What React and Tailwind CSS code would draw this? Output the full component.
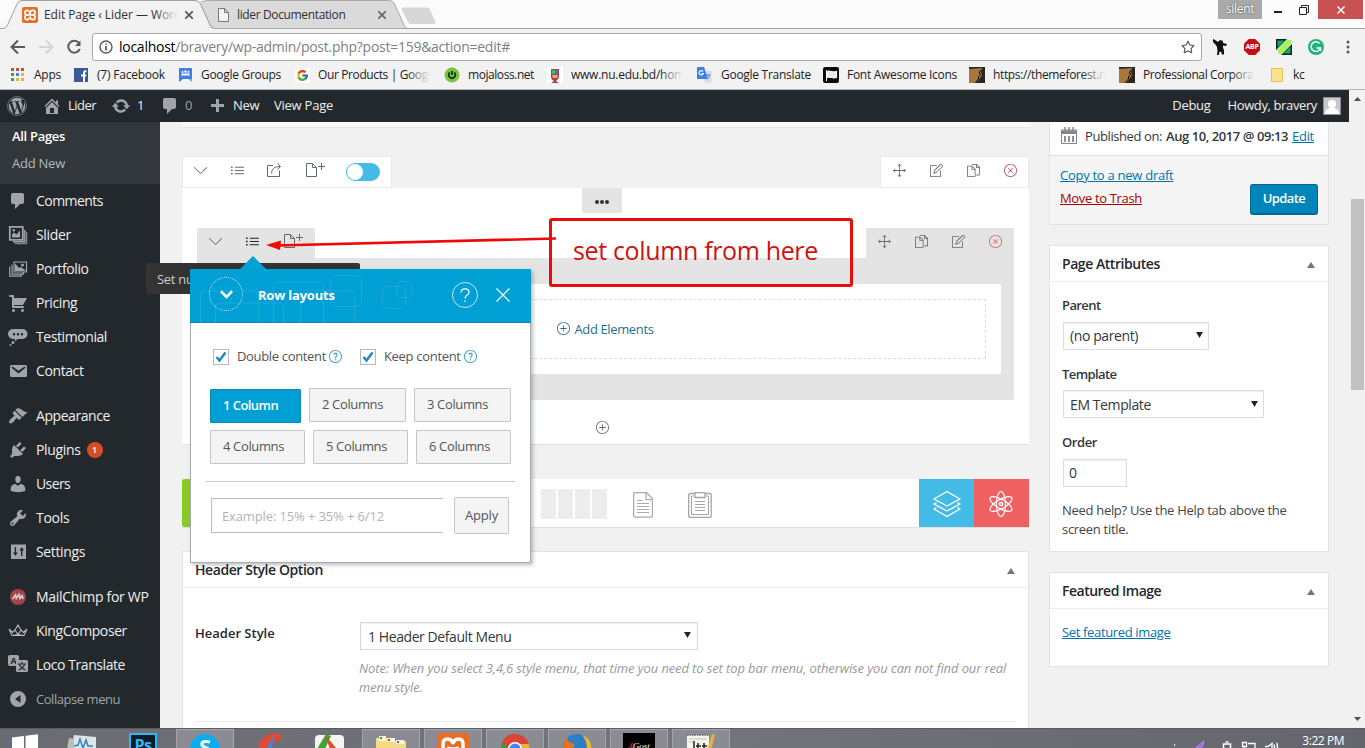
import React from "react";
import { SlArrowDown, SlList, SlDoc, SlCursorMove, SlNote, SlDocs, SlClose, SlPlus, SlQuestion } from "react-icons/sl";
import { FaWordpress, FaRegStar } from "react-icons/fa";
import { FcGoogle } from "react-icons/fc";

const Dash = ({ d, className = "" }) => (
  <svg viewBox="0 0 20 20" className={"size-5 shrink-0 fill-[#a0a5aa] " + className}><path fillRule="evenodd" d={d} /></svg>
);

const P = {
  comment: "M5 2h9c1.1 0 2 .9 2 2v7c0 1.1-.9 2-2 2h-2l-5 5v-5H5c-1.1 0-2-.9-2-2V4c0-1.1.9-2 2-2z",
  home: "M16 8.5l1.53 1.53-1.06 1.06L10 4.6l-6.47 6.49-1.06-1.06L10 2.5l4 4v-2h2v4zm-6-2.46l6 5.99V18H4v-5.97zM12 17v-5H8v5h4z",
  update: "M10.2 3.28c3.53 0 6.43 2.61 6.92 6h2.08l-3.5 4-3.5-4h2.32c-.45-1.97-2.21-3.45-4.32-3.45-1.45 0-2.73.71-3.54 1.78L4.95 5.66C6.23 4.2 8.11 3.28 10.2 3.28zm-.4 13.44c-3.52 0-6.43-2.61-6.92-6H.8l3.5-4c1.17 1.33 2.33 2.67 3.5 4H5.48c.45 1.97 2.21 3.45 4.32 3.45 1.45 0 2.73-.71 3.54-1.78l1.71 1.95c-1.28 1.46-3.15 2.38-5.25 2.38z",
  plus: "M17 8v3h-5v5H9v-5H4V8h5V3h3v5h5z",
  cart: "M6 13h9c.55 0 1 .45 1 1s-.45 1-1 1H5c-.55 0-1-.45-1-1V4H2c-.55 0-1-.45-1-1s.45-1 1-1h3c.55 0 1 .45 1 1v2h13l-4 7H6v1zm-.5 3c.83 0 1.5.67 1.5 1.5S6.33 19 5.5 19 4 18.33 4 17.5 4.67 16 5.5 16zm9 0c.83 0 1.5.67 1.5 1.5s-.67 1.5-1.5 1.5-1.5-.67-1.5-1.5.67-1.5 1.5-1.5z",
  email: "M3.87 4h13.25C18.37 4 19 4.59 19 5.79v8.42c0 1.19-.63 1.79-1.88 1.79H3.87c-1.25 0-1.88-.6-1.88-1.79V5.79c0-1.2.63-1.79 1.88-1.79zm6.62 8.6l6.74-5.53c.24-.2.43-.66.13-1.07-.29-.41-.82-.42-1.17-.17l-5.7 3.86L4.8 5.83c-.35-.25-.88-.24-1.17.17-.3.41-.11.87.13 1.07z",
  brush: "M14.48 11.06L7.41 3.99l1.5-1.5c.5-.56 2.3-.47 3.51.32 1.21.8 1.43 1.28 2.91 2.1 1.18.64 2.45 1.26 4.45.85zm-.71.71L6.7 4.7 4.93 6.47c-.39.39-.39 1.02 0 1.41l1.06 1.06c.39.39.39 1.03 0 1.42-.6.6-1.43 1.11-2.21 1.69-.35.26-.7.53-1.01.84C1.43 14.23.4 16.08 1.4 17.07c.99 1 2.84-.03 4.18-1.36.31-.31.58-.66.85-1.02.57-.78 1.08-1.61 1.69-2.21.39-.39 1.02-.39 1.41 0l1.06 1.06c.39.39 1.02.39 1.41 0z",
  plug: "M13.11 4.36L9.87 7.6 8 5.73l3.24-3.24c.35-.34 1.05-.2 1.56.32.52.51.66 1.21.31 1.55zm-8 1.77l.91-1.12 9.01 9.01-1.19.84c-.71.71-2.63 1.16-3.82 1.16H6.14L4.9 17.26c-.59.59-1.54.59-2.12 0-.59-.58-.59-1.53 0-2.12l1.24-1.24v-3.88c0-1.13.4-3.19 1.09-3.89zm7.26 3.97l3.24-3.24c.34-.35 1.04-.21 1.55.31.52.51.66 1.21.31 1.55l-3.24 3.25z",
  user: "M10 9.25c-2.27 0-2.73-3.44-2.73-3.44C7 4.02 7.82 2 9.97 2c2.16 0 2.98 2.02 2.71 3.81 0 0-.41 3.44-2.68 3.44zm0 2.57L12.72 10c2.39 0 4.52 2.33 4.52 4.53v2.49s-3.65 1.13-7.24 1.13c-3.65 0-7.24-1.13-7.24-1.13v-2.49c0-2.25 1.94-4.48 4.47-4.48z",
  wrench: "M16.68 9.77c-1.34 1.34-3.3 1.67-4.95.99l-5.41 6.52c-.99.99-2.59.99-3.58 0s-.99-2.59 0-3.57l6.52-5.42c-.68-1.65-.35-3.61.99-4.95 1.28-1.28 3.12-1.62 4.72-1.06l-2.89 2.89 2.82 2.82 2.86-2.87c.53 1.58.18 3.39-1.08 4.65zM3.81 16.21c.4.39 1.04.39 1.43 0 .4-.4.4-1.04 0-1.43-.39-.4-1.03-.4-1.43 0-.39.39-.39 1.03 0 1.43z",
  settings: "M3 2.500h15v14.500H3zM6.700 5v5.500H5l2.400 3.500 2.400-3.500H8.100V5zM13 14V8.500h-1.700L13.700 5l2.400 3.500h-1.700V14z",
  collapse: "M10 2a8 8 0 1 1 0 16a8 8 0 0 1 0-16zM12.500 6L7 10l5.500 4z",
  testimonial: "M5 2h9.500a4.500 4.500 0 0 1 0 10H9.500L7 14.500V12H5a5 5 0 0 1 0-10zM6 6a1.200 1.200 0 1 0 .01 2.400A1.200 1.200 0 0 0 6 6zm4 0a1.200 1.200 0 1 0 .01 2.400A1.200 1.200 0 0 0 10 6zm4 0a1.200 1.200 0 1 0 .01 2.400A1.200 1.200 0 0 0 14 6zM5 14a1.500 1.500 0 1 1 0 3a1.500 1.500 0 0 1 0-3zM2.500 17a1 1 0 1 1 0 2a1 1 0 0 1 0-2z",
};

const SliderIcon = () => (
  <svg viewBox="0 0 20 20" className="size-5 shrink-0" fill="none" stroke="#a0a5aa" strokeWidth="1.500">
    <path d="M1.800 1.800h13v13h-13z" strokeWidth="1.800" /><path d="M5 16.700h11.800V5" strokeWidth="1.400" /><path d="M7 18.700h11.700V7" strokeWidth="1" />
    <path d="M4 12.500V9.500l2-2 2.500 2 3.500-4v7z" fill="#a0a5aa" stroke="none" /><circle cx="5.800" cy="5.300" r="1.300" fill="#a0a5aa" stroke="none" />
  </svg>
);
const PortfolioIcon = () => (
  <svg viewBox="0 0 20 20" className="size-5 shrink-0" fill="none" stroke="#a0a5aa" strokeWidth="1.200">
    <path d="M6 3h12.500v10H6z" /><path d="M4 5.500v9.700h11.500V13M1.700 7.500v9.700h11.500V15" />
    <path d="M7 12V4.500l4 4.500 2-1 5 4z" fill="#a0a5aa" stroke="none" /><circle cx="14.500" cy="6" r="1.500" fill="#a0a5aa" stroke="none" />
  </svg>
);
const ChimpIcon = () => (
  <svg viewBox="0 0 20 20" className="size-5 shrink-0"><circle cx="10" cy="10" r="8" fill="#a3434b" /><path d="M4.500 12L7.500 8l.8 3.500L11 7.500l1 4L14 8.500l1.300 3.500" fill="none" stroke="#d3c9cb" strokeWidth="1.700" /></svg>
);
const CrownIcon = () => (
  <svg viewBox="0 0 20 20" className="size-5 shrink-0" fill="none" stroke="#b4b9be" strokeWidth="1.100"><path d="M10 4L7 9l3 4.500L13 9zM1 8l3.500 3.500L7 9M19 8l-3.500 3.500L13 9M1 8l3 6.500h12L19 8M4 14.500L10 13.500l6 1" /></svg>
);
const LocoIcon = () => (
  <div className="relative size-5 shrink-0">
    <div className="grid h-[11px] w-[11px] place-items-center rounded-[2px] bg-[#a0a5aa] text-[9px] leading-none font-bold text-[#23282d] ">A</div>
    <svg viewBox="0 0 12 12" className="absolute top-[5px] left-[8px] size-3"><rect width="12" height="12" rx="1.500" fill="#a0a5aa" /><path d="M2 4h8M6 2v2M8.500 4.500C7.500 7.500 5 9 2.500 10M3.500 4.500C4.500 7.500 7 9 9.500 10" stroke="#23282d" strokeWidth="1.100" fill="none" /></svg>
  </div>
);

const MENU = [
  [<Dash d={P.comment} />, "Comments", "tracking-[-0.54px]"],
  [<SliderIcon />, "Slider", "tracking-[-0.35px]"],
  [<PortfolioIcon />, "Portfolio", "tracking-[-0.4px]"],
  [<Dash d={P.cart} />, "Pricing", "tracking-[-0.4px]"],
  [<Dash d={P.testimonial} />, "Testimonial", "tracking-[-0.42px]"],
  [<Dash d={P.email} />, "Contact", "tracking-[-0.4px]"],
  null,
  [<Dash d={P.brush} />, "Appearance", "tracking-[-0.43px]"],
  [<Dash d={P.plug} />, "Plugins", "tracking-[-0.35px]", 1],
  [<Dash d={P.user} />, "Users", "tracking-[-0.6px]"],
  [<Dash d={P.wrench} />, "Tools", "tracking-[-0.3px]"],
  [<Dash d={P.settings} />, "Settings", "tracking-[-0.35px]"],
  null,
  [<ChimpIcon />, "MailChimp for WP", "tracking-[-0.3px]"],
  [<CrownIcon />, "KingComposer", "tracking-[-0.4px]"],
  [<LocoIcon />, "Loco Translate", "tracking-[-0.44px]"],
];

const Fade = ({ children, className }) => (
  <span className={"relative overflow-hidden whitespace-pre " + className}>{children}
    <span className="absolute inset-y-0 right-0 w-6 bg-gradient-to-r from-transparent to-[#f2f2f2]" />
  </span>
);

const Beard = () => (
  <svg viewBox="0 0 16 16" className="size-4"><rect width="16" height="16" fill="#2b2624" /><path d="M0 2l13-1-1 4 1 3-2 3-3 4-4 1H0z" fill="#a8783a" /><path d="M12 3l-2 3 2 1-3 3 1 1-3 4" stroke="#15110f" fill="none" /></svg>
);

const MARKS = [
  ["w-[63px]", "Apps", "tracking-[-0.25px]", <svg viewBox="0 0 14 14" className="mr-[9px] size-[14px] shrink-0"><rect width="3" height="3" x="0" fill="#d2473c" /><rect width="3" height="3" x="5" fill="#d2473c" /><rect width="3" height="3" x="10" fill="#d2473c" /><rect y="5" width="3" height="3" fill="#3ba05c" /><rect y="5" width="3" height="3" x="5" fill="#4683ea" /><rect y="5" width="3" height="3" x="10" fill="#eab035" /><rect y="10" width="3" height="3" fill="#3ba05c" /><rect y="10" width="3" height="3" x="5" fill="#eab035" /><rect y="10" width="3" height="3" x="10" fill="#eab035" /></svg>],
  ["w-[105px]", "(7) Facebook", "tracking-[-0.21px]", <svg viewBox="0 0 14 14" className="mr-[9px] size-[14px] shrink-0"><rect width="14" height="14" fill="#3b5998" /><path d="M12.500 3.200h-1.200q-1.300 0-1.300 1.300V14M7 7.500h5.200" stroke="#fff" strokeWidth="2" fill="none" /></svg>],
  ["w-[117px]", "Google Groups", "tracking-[-0.3px]", <svg viewBox="0 0 16 16" className="mr-[7px] -ml-px size-4"><path d="M1 1h13v11H5l-4 3z" fill="#3f7fe8" /><path d="M10 12h4v3z" fill="#7baaf7" /><circle cx="4.500" cy="5" r="1" fill="#fff" /><circle cx="7.500" cy="4.500" r="1.200" fill="#fff" /><circle cx="10.500" cy="5" r="1" fill="#fff" /><path d="M3 8.500h9L11 6.500H4z" fill="#fff" /></svg>],
  ["w-[149px]", "Our Products | Google", "tracking-[-0.38px]", <span className="mr-[8px] -ml-px flex size-[15px] items-center justify-center rounded-[2px] bg-white"><FcGoogle className="size-[13px]" /></span>, 1],
  ["w-[103px]", "mojaloss.net", "tracking-[-0.44px]", <svg viewBox="0 0 16 16" className="mr-[8px] -ml-px size-4"><circle cx="8" cy="8" r="7.500" fill="#7cc243" /><path d="M8 4v4M5.800 5.500a3.300 3.300 0 1 0 4.400 0" stroke="#143b12" strokeWidth="1.800" fill="none" /></svg>],
  ["w-[149px]", "www.nu.edu.bd/home", "tracking-[-0.25px]", <svg viewBox="0 0 16 16" className="mr-[8px] -ml-px size-4"><rect width="16" height="16" fill="#fff" /><path d="M4 2h8v7c0 3-2 4-3 5l3 2H4l3-2c-2-1-3-2-3-5z" fill="#a83f56" /><path d="M5 3h3v4H5z" fill="#4fae6b" /><path d="M8 3h3v4H8z" fill="#3e7bc0" /><path d="M5 8h6l-1 3H6z" fill="#d8b648" /></svg>, 1],
  ["w-[126px]", "Google Translate", "tracking-[-0.28px]", <svg viewBox="0 0 16 16" className="mr-[9px] -ml-px size-4"><path d="M6 4h9.500v11.500H9z" fill="#d7dbe2" /><path d="M1 0h7l4 12H1z" fill="#3f7fe8" /><path d="M7 4.500A2.200 2.200 0 1 0 7.300 6.500H5.500" stroke="#fff" strokeWidth="1.100" fill="none" /><path d="M10.500 8h4M12.500 7v1M13.500 8.500c-.5 2-1.500 3-2.500 3.500" stroke="#5b7fc0" fill="none" /></svg>],
  ["w-[146px]", "Font Awesome Icons", "tracking-[-0.28px]", <svg viewBox="0 0 16 16" className="mr-[8px] size-4"><rect width="16" height="16" rx="2" fill="#0b0b0b" /><path d="M3.500 3v11" stroke="#fff" /><path d="M4 4.500c3-1.500 5 1.500 9.500 0v6c-4 1.500-6-1.500-9.500 0z" stroke="#fff" strokeWidth="1.200" fill="#e8e8e8" /></svg>],
  ["w-[150px]", "https://themeforest.ne", "tracking-[-0.36px]", <span className="mr-[8px]"><Beard /></span>, 1],
  ["w-[152px]", "Professional Corporati", "tracking-[-0.38px]", <span className="mr-[8px]"><Beard /></span>, 1],
  ["w-[60px]", "kc", "tracking-[-0.2px]", <span className="mr-[10px] h-[14px] w-[12px] border border-[#e8c354] bg-[#fbe38e]" />],
];

const Caret = () => <svg viewBox="0 0 8 7" className="mb-[2px] h-[6px] w-[7px] fill-[#222]"><path d="M0 0h8L4 7z" /></svg>;
const Up = () => <svg viewBox="0 0 8 6" className="mt-[2px] h-[6px] w-2 fill-[#72777c]"><path d="M0 6h8L4 0z" /></svg>;
const DocPlus = () => <span className="flex"><svg viewBox="0 0 11 14" className="h-[14px] w-[11px]" fill="none" stroke="currentColor"><path d="M.5.5h6l4 4v9H.5zM6.500.5v4h4" /></svg><svg viewBox="0 0 7 7" className="ml-px size-[7px]" stroke="currentColor"><path d="M3.500 0v7M0 3.500h7" /></svg></span>;

function Chrome() {
  return (
    <div className="shrink-0">
      <div className="relative h-[29px] bg-[#fbfbfb]">
        <svg className="absolute inset-0 h-[29px] w-[1365px]" viewBox="0 0 1365 29" fill="none">
          <path d="M0 28.500H1365" stroke="#a0a0a0" />
          <path d="M202 1.500Q206 .5 209 .5H389Q393 .5 394.500 4L404 25Q405 28.500 408 28.500H212L200 4z" fill="#dadada" stroke="#a9a9a9" />
          <path d="M0 28.500H3Q6 28 7.500 25L17 4Q18.500 .5 22 .5H195Q199 .5 200.500 4L210 25Q211 28.500 215 28.500V29.500H0z" fill="#f2f2f2" />
          <path d="M0 28.500H3Q6 28 7.500 25L17 4Q18.500 .5 22 .5H195Q199 .5 200.500 4L210 25Q211 28.500 215 28.500" stroke="#a0a0a0" />
          <path d="M402.500 7.500H427Q429 7.500 430 9.500L435.500 22Q436 24 434 24H411Q409 24 408 22L402 10Q401.500 7.500 402.500 7.500z" fill="#d6d6d6" />
        </svg>
        <div className="relative flex h-[29px] items-center text-[12px] text-[#303030]">
          <svg viewBox="0 0 16 16" className="ml-[22px] size-4"><rect width="16" height="16" rx="2" fill="#ea6d23" /><g fill="none" stroke="#fff" strokeWidth="1.700"><path d="M8 8h2.500c3.600 0 3.400-4.600.4-4.600C8.800 3.400 8 5 8 8 8 5 7.200 3.400 5.100 3.400c-3 0-3.200 4.600.4 4.600H8" /><path d="M5.500 8c-3.600 0-3.400 4.600-.4 4.600 1.500 0 2.400-1 2.900-2.200.5 1.200 1.400 2.200 2.900 2.200 3 0 3.200-4.600-.4-4.600" /></g></svg>
          <Fade className="ml-[6px] w-[134px] tracking-[-0.05px]">Edit Page ‹ Lider — WordP</Fade>
          <svg viewBox="0 0 8 8" className="ml-[7px] size-2" stroke="#555" strokeWidth="1.600"><path d="M0 0l8 8M8 0L0 8" /></svg>
          <svg viewBox="0 0 11 14" className="ml-[25px] h-[14px] w-[11px]" fill="#f3f3f3" stroke="#777"><path d="M.5.5h6l4 4v9H.5zM6.500.5v4h4" /></svg>
          <span className="ml-[8px] w-[141px] pt-px tracking-[-0.36px]">lider Documentation</span>
          <svg viewBox="0 0 8 8" className="size-2" stroke="#666" strokeWidth="1.600"><path d="M0 0l8 8M8 0L0 8" /></svg>
          <span className="grow" />
          <span className="h-[19px] w-[44px] self-start bg-[#a9a9a9] text-center text-[12px] leading-[18px] tracking-[-0.3px] text-white [text-shadow:0_0_2px_#333]">silent</span>
          <span className="mt-[-5px] ml-[12px] h-[2px] w-2 bg-[#222] " />
          <svg viewBox="0 0 10 10" className="mt-[-10px] ml-[17px] size-[10px]" fill="none" stroke="#222"><path d="M2.500 2.500V.5h7v7h-2M.5 2.500h7v7h-7z" /></svg>
          <span className="mr-[2px] ml-[9px] grid h-[19px] w-[45px] place-items-center self-start bg-[#c75050]"><svg viewBox="0 0 8 8" className="size-2" stroke="#fff" strokeWidth="1.500"><path d="M.5 .5l7 7M7.500 .5l-7 7" /></svg></span>
        </div>
      </div>
      <div className="flex h-[33px] items-end bg-[#f2f2f2]">
        <svg viewBox="0 0 92 33" className="h-[33px] w-[92px]" fill="none" strokeWidth="2"><path d="M25 18H12M18 11.500L11.500 18l6.500 6.500" stroke="#5a5a5a" /><path d="M39 18h13M46 11.500l6.500 6.500-6.500 6.500" stroke="#d4d4d4" /><path d="M79 14a6 6 0 1 0 .8 6" stroke="#5a5a5a" /><path d="M80.500 11.500v5.500H75z" fill="#5a5a5a" /></svg>
        <div className="mb-[1px] flex h-[28px] w-[1110px] items-center rounded-[3px] border border-[#a8a8a8] bg-white">
          <svg viewBox="0 0 14 14" className="ml-[6px] size-[14px]" fill="none" stroke="#5a5a5a" strokeWidth="1.400"><circle cx="7" cy="7" r="6" /><path d="M7 6v4.500M7 3.500v1.300" strokeWidth="1.700" /></svg>
          <span className="ml-[6px] grow pb-[2px] text-[14px] tracking-[-0.265px] text-[#808080]"><span className="text-black">localhost</span>/bravery/wp-admin/post.php?post=159&amp;action=edit#</span>
          <FaRegStar className="mr-[6px] size-[14px] text-[#5a5a5a]" />
        </div>
        <div className="mb-[7px] ml-[10px] flex items-center">
          <svg viewBox="0 0 16 16" className="size-4" fill="#111"><path d="M1 0l2 1 3 2 2-2 3 1v2l4 1-1 2-3-.5v2l1 3v4h-2l-1-3-2 1v3H5l.5-5L5 8 3.500 5.500 1 3z" /></svg>
          <span className="ml-[16px] flex size-4 items-center justify-center bg-[#c70d14] text-[7px] font-bold tracking-[-0.3px] text-white [clip-path:polygon(30%_0,70%_0,100%_30%,100%_70%,70%_100%,30%_100%,0_70%,0_30%)]">ABP</span>
          <svg viewBox="0 0 16 16" className="ml-[16px] size-4"><path d="M0 0h11L0 11zM16 5v11H5z" fill="#122126" /><path d="M1.500 8.500v-7h7zM14.500 7.500v7h-7z" fill="#0fae5d" /><path d="M1 11L11 1h4v4L6 15H3z" fill="#a4f55c" /></svg>
          <svg viewBox="0 0 16 16" className="ml-[16px] size-4"><circle cx="8" cy="8" r="8" fill="#1fb47a" /><path d="M11.500 4.500A4.800 4.800 0 1 0 12.500 9H8.500M12.500 9v3" stroke="#fff" strokeWidth="1.500" fill="none" /></svg>
          <svg viewBox="0 0 4 14" className="ml-[22px] h-[14px] w-1 fill-[#5a5a5a]"><circle cx="2" cy="2" r="1.500" /><circle cx="2" cy="7" r="1.500" /><circle cx="2" cy="12" r="1.500" /></svg>
        </div>
      </div>
      <div className="flex h-[28px] items-center border-b border-[#b5b5b5] bg-[#f2f2f2] pb-px pl-[11px] text-[12px] text-[#1c1c1c]">
        {MARKS.map(([w, t, tr, icon, fade]) => (
          <div key={t} className={"flex h-[26px] shrink-0 items-center " + w}>{icon}{fade ? <Fade className={"mb-px w-[112px] " + tr}>{t}</Fade> : <span className={"mb-px whitespace-nowrap " + tr}>{t}</span>}</div>
        ))}
      </div>
    </div>
  );
}

function AdminBar() {
  return (
    <div className="flex h-8 shrink-0 items-center bg-[#23282d] text-[13px] tracking-[-0.3px] text-[#eee]">
      <FaWordpress className="ml-[7px] size-5 text-[#a0a5aa]" />
      <Dash d={P.home} className="ml-[15px]" /><span className="ml-[6px] w-[43px] tracking-[-0.5px]">Lider</span>
      <Dash d={P.update} /><span className="ml-[6px] w-[23px]">1</span>
      <Dash d={P.comment} className="-mt-px" /><span className="ml-[5px] w-[22px] text-[#9ea3a8]">0</span>
      <Dash d={P.plus} /><span className="ml-[6px] w-[41px]">New</span>
      <span className="tracking-[-0.24px]">View Page</span>
      <span className="grow" />
      <span className="mr-[17px]">Debug</span><span className="tracking-[-0.38px]">Howdy, bravery</span>
      <svg viewBox="0 0 18 18" className="mr-[8px] ml-[6px] size-[18px]"><rect width="18" height="18" fill="#8c8f94" /><rect x="1" y="1" width="16" height="16" fill="#c8c8c8" /><circle cx="9" cy="7" r="4" fill="#fff" /><path d="M2 17c0-5 3-6 7-6s7 1 7 6z" fill="#fff" /></svg>
    </div>
  );
}

function Sidebar() {
  return (
    <div className="w-[160px] shrink-0 bg-[#23282d] text-[14px] text-[#eee]">
      <div className="h-[62px] bg-[#32373c] pt-px pl-3 text-[13px] leading-[27px]">
        <div className="font-semibold tracking-[-0.31px] text-white">All Pages</div>
        <div className="tracking-[-0.24px] text-[#b4b9be]">Add New</div>
      </div>
      {MENU.map((m, i) => m ? (
        <div key={i} className="flex h-[34px] items-center pl-2">
          {m[0]}<span className={"ml-2 pb-[2px] whitespace-nowrap " + m[2]}>{m[1]}</span>
          {m[3] && <span className="ml-[6px] grid size-4 place-items-center rounded-full bg-[#d54e21] text-[9px] font-semibold text-white">1</span>}
        </div>
      ) : <div key={i} className="h-[11px]" />)}
      <div className="flex h-[34px] items-center pl-2"><Dash d={P.collapse} /><span className="ml-2 pt-px text-[13px] tracking-[-0.45px] text-[#a0a5aa]">Collapse menu</span></div>
    </div>
  );
}

function Builder() {
  return (
    <div className="ml-[22px] w-[847px] shrink-0 text-[#66696d]">
      <div className="h-[6px] border-b border-[#e5e5e5] bg-[#fafafa]" />
      <div className="mt-[28px] flex justify-between">
        <div className="flex h-[32px] w-[210px] items-center border border-[#e8e8e8] bg-white pb-[4px] pl-[11px]">
          <SlArrowDown className="size-[13px]" /><SlList className="ml-[24px] size-[13px]" />
          <svg viewBox="0 0 14 14" className="ml-[23px] size-[14px]" fill="none" stroke="currentColor"><path d="M6 2.500H.5v11h12V7.500" /><path d="M4.500 10.500C5 6 7 3.500 13 3.500M10.500.5l3 3-3 3" /></svg>
          <span className="ml-[25px]"><DocPlus /></span>
          <span className="mt-[4px] ml-[21px] flex h-[18px] w-[34px] items-center rounded-full bg-[#44bbe4] pl-px"><span className="size-4 rounded-full bg-white" /></span>
        </div>
        <div className="flex h-[32px] w-[149px] items-center gap-[24px] border border-[#e8e8e8] bg-white pb-[4px] pl-[12px]">
          <SlCursorMove className="size-[13px]" /><SlNote className="size-[13px]" /><SlDocs className="size-[13px]" /><SlClose className="size-[13px] text-[#b5474b]" />
        </div>
      </div>
      <div className="h-[257px] border-b border-[#e0e0e0] bg-white px-[15px]">
        <div className="flex h-[40px] justify-center pr-[7px]"><div className="flex h-[25px] w-[40px] items-center justify-center gap-[1.5px] rounded-b-[2px] bg-[#e4e4e4] pt-[3px]"><i className="size-[3.500px] rounded-full bg-[#333]" /><i className="size-[3.500px] rounded-full bg-[#333]" /><i className="size-[3.500px] rounded-full bg-[#333]" /></div></div>
        <div className="flex justify-between">
          <div className="flex h-[30px] w-[118px] items-center bg-[#e4e4e4] pb-[4px] pl-[12px]"><SlArrowDown className="size-[13px]" /><SlList className="ml-[24px] size-[13px] text-[#222]" /><span className="ml-[25px]"><DocPlus /></span></div>
          <div className="flex h-[30px] w-[148px] items-center gap-[24px] bg-[#e4e4e4] pb-[4px] pl-[12px]"><SlCursorMove className="size-[13px]" /><SlDocs className="size-[13px]" /><SlNote className="size-[13px]" /><SlClose className="size-[13px] text-[#e0605f]" /></div>
        </div>
        <div className="h-[142px] rounded-b-[2px] bg-[#e4e4e4] px-[13px] pt-[26px]">
          <div className="h-[90px] rounded-[2px] bg-white px-[15px] pt-[15px]">
            <div className="flex h-[60px] items-center justify-center border border-dashed border-[#dcdcdc] pt-[2px] text-[13px] tracking-[-0.37px] text-[#1f6f96]"><SlPlus className="mr-[4px] mb-[3px] size-[13px]" />Add Elements</div>
          </div>
        </div>
        <div className="flex justify-center pt-[21px] pr-[7px]"><SlPlus className="size-[13px]" /></div>
      </div>
      <div className="mt-[34px] flex h-[49px] border-b border-[#e0e0e0] bg-white">
        <div className="w-[55px] rounded-l-[2px] bg-[#8acc26]" />
        <div className="ml-[304px] flex gap-[2px] pt-[10px]">{[0, 1, 2, 3].map(i => <i key={i} className="h-[30px] w-[15px] bg-[#ededed]" />)}</div>
        <svg viewBox="0 0 20 26" className="mt-[13px] ml-[26px] h-[26px] w-[20px]" fill="none" stroke="#aaa"><path d="M1.500.6h12l6 6v17q0 1.500-1.500 1.500H2Q.6 25 .6 23.500V2Q.6.6 2 .6zM13 .6v7h6.500" strokeWidth="1.300" /><path d="M4 8.500h5.500M4 11.500h12M4 14.500h12M4 17.500h12M4 20.500h12" /></svg>
        <svg viewBox="0 0 24 26" className="mt-[13px] ml-[35px] h-[26px] w-[24px]" fill="none" stroke="#a5a5a5"><rect x=".7" y="1.500" width="22.500" height="24" rx="1.500" strokeWidth="1.300" /><path d="M6 4H3.500v18.500h17V4H18" /><path d="M7 .7h10v4.800H7z" fill="#fff" strokeWidth="1.300" /><path d="M7 9.500h10M7 12.500h10M7 15.500h10M7 18.500h10" /></svg>
        <div className="ml-auto grid h-12 w-[55px] place-items-center bg-[#44bbe4] pt-[2px]"><svg viewBox="0 0 28 28" className="size-7" fill="none" stroke="#fff" strokeWidth="1.400" strokeLinejoin="round"><path d="M14 1.500l13 7.500-13 7-13-7z" /><path d="M3.500 12.500L1 14l13 7 13-7-2.500-1.500M3.500 17.500L1 19l13 7.500L27 19l-2.500-1.500" /></svg></div>
        <div className="grid h-12 w-[55px] place-items-center bg-[#ef6161] pt-[2px] pr-[1px]"><svg viewBox="0 0 28 28" className="size-7" fill="none" stroke="#fff" strokeWidth="1.200"><ellipse cx="14" cy="14" rx="4.500" ry="12.500" /><ellipse cx="14" cy="14" rx="4.500" ry="12.500" transform="rotate(60 14 14)" /><ellipse cx="14" cy="14" rx="4.500" ry="12.500" transform="rotate(-60 14 14)" /><circle cx="14" cy="14" r="1.600" strokeWidth="1.500" /></svg></div>
      </div>
      <div className="mt-[23px] h-[200px] w-[847px] border border-[#e3e3e3] bg-white text-[#23282d]">
        <div className="flex h-[36px] items-center justify-between border-b border-[#ececec] pr-[13px] pl-[12px]"><span className="text-[14px] font-semibold tracking-[-0.43px]">Header Style Option</span><Up /></div>
        <div className="flex pt-[34px] pl-[12px]">
          <span className="w-[165px] pt-[2px] text-[13px] font-semibold">Header Style</span>
          <div>
            <div className="flex h-[28px] w-[338px] items-center justify-between border border-[#d8d8d8] pr-[6px] pl-[7px] text-[14px] tracking-[-0.42px] text-[#32373c] shadow-[inset_0_1px_2px_rgba(0,0,0,0.07)]">1 Header Default Menu<Caret /></div>
            <p className="mt-[9px] -ml-px text-[13px] leading-[19px] tracking-[-0.118px] whitespace-nowrap text-[#999] italic">Note: When you select 3,4,6 style menu, that time you need to set top bar menu, otherwise you can not find our real<br />menu style.</p>
          </div>
        </div>
        <div className="mt-[24px] mr-[12px] ml-[12px] border-t border-[#e8ecee]" />
      </div>
    </div>
  );
}

const Sel = ({ w, children }) => <div className={"ml-px flex h-[28px] items-center justify-between border border-[#ddd] bg-white pr-[5px] pl-[6px] text-[14px] tracking-[-0.4px] text-[#32373c] shadow-[inset_0_1px_2px_rgba(0,0,0,0.07)] " + w}>{children}<Caret /></div>;

function SideBoxes() {
  return (
    <div className="ml-[20px] w-[280px] shrink-0 text-[13px] text-[#32373c]">
      <div className="h-[103px] border border-t-0 border-[#e3e3e3] bg-[#f5f5f5]">
        <div className="flex h-[34px] items-center border-b border-[#ddd] bg-white pl-[11px] whitespace-nowrap">
          <svg viewBox="0 0 16 17" className="mr-[8px] mb-[6px] h-[17px] w-4" fill="none" stroke="#82878c"><path d="M.5 3h15v13.500H.5z" /><path d="M.5 4.500h15M.5 6h15" strokeWidth="2" /><path d="M4 0v4M8 0v4M12 0v4" strokeWidth="1.500" /><path d="M4 9v6M8 9v6M12 9v6" strokeWidth="1.800" /></svg>
          <span className="mb-[4px] tracking-[-0.41px]">Published on:</span><b className="mb-[4px] ml-[4px] font-semibold tracking-[-0.43px]">Aug 10, 2017 @ 09:13</b><a className="mb-[4px] ml-[4px] tracking-[-0.3px] text-[#0073aa] underline">Edit</a>
        </div>
        <div className="flex justify-between pt-[8px] pr-[10px] pl-[10px]">
          <div className="leading-[23px]"><div className="tracking-[-0.27px] text-[#0073aa] underline">Copy to a new draft</div><div className="tracking-[-0.34px] text-[#a00] underline">Move to Trash</div></div>
          <div className="mt-[20px] grid h-[31px] w-[68px] place-items-center rounded-[3px] border border-b-2 border-[#006799] bg-[#0085ba] font-semibold tracking-[-0.6px] text-white">Update</div>
        </div>
      </div>
      <div className="mt-[20px] h-[307px] border border-[#e3e3e3] bg-white">
        <div className="flex h-[36px] items-center justify-between border-b border-[#ececec] pr-[13px] pl-[12px] text-[14px] font-semibold tracking-[-0.45px] text-[#23282d]">Page Attributes<Up /></div>
        <div className="pl-[12px] leading-[18px]">
          <div className="pt-[14px] pb-[8px] font-semibold tracking-[-0.6px]">Parent</div><Sel w="w-[146px]">(no parent)</Sel>
          <div className="pt-[15px] pb-[7px] font-semibold tracking-[-0.6px]">Template</div><Sel w="w-[201px] pt-px">EM Template</Sel>
          <div className="pt-[15px] pb-[8px] font-semibold tracking-[-0.4px]">Order</div>
          <div className="ml-px flex h-[28px] w-[64px] items-center border border-[#ddd] pl-[5px] text-[14px] shadow-[inset_0_1px_2px_rgba(0,0,0,0.07)]">0</div>
          <p className="pt-[14px] leading-[19px] tracking-[-0.3px] text-[#444]">Need help? Use the Help tab above the<br />screen title.</p>
        </div>
      </div>
      <div className="mt-[20px] h-[95px] border border-[#e3e3e3] bg-white">
        <div className="flex h-[36px] items-center justify-between border-b border-[#ececec] pr-[13px] pl-[12px] text-[14px] font-semibold tracking-[-0.5px] text-[#23282d]">Featured Image<Up /></div>
        <div className="pt-[14px] pl-[12px] tracking-[-0.35px] text-[#0073aa] underline">Set featured image</div>
      </div>
    </div>
  );
}

const Check = () => <span className="grid size-4 place-items-center border border-[#b4b9be] bg-white"><svg viewBox="0 0 12 12" className="size-3" fill="none" stroke="#1e8cbe" strokeWidth="2.600"><path d="M1.500 6l3 3.500L10.500 1.500" /></svg></span>;
const Btn = ({ children, w, m = "" }) => <div className={"h-[34px] border border-[#c6c6c6] bg-[#f4f4f4] pl-[12px] leading-[31px] tracking-[-0.36px] rounded-[1px] " + w + " " + m}>{children}</div>;

function Popup() {
  return (
    <div className="absolute top-[269px] left-[190px] h-[294px] w-[341px] border border-[#a5adb2] bg-white text-[13px] text-[#555] shadow-[2px_2px_4px_rgba(0,0,0,0.25)]">
      <svg viewBox="0 0 28 14" className="absolute -top-[14px] left-[48px] h-[14px] w-7 fill-[#009fd4]"><path d="M0 14L14 0l14 14z" /></svg>
      <div className="relative -mx-px -mt-px flex h-[54px] items-center border-b border-[#0f86ad] bg-[#009fd4]">
        <svg viewBox="0 0 341 54" className="absolute inset-0 h-[54px] w-[341px]" fill="none" stroke="#2fb2de" strokeOpacity=".6"><path d="M10.500 54V26q0-4 4-4h50q4 0 4 4v28M25.500 54V38q0-4 4-4h60q4 0 4 4v16M83.500 54V17q0-4 4-4h42q4 0 4 4v37M110.500 54V26q0-4 4-4h46q4 0 4 4v28" /><rect x="140.500" y="6.500" width="31" height="31" rx="5" /><rect x="192.500" y="17.500" width="23" height="22" rx="5" /><rect x="206.500" y="12.500" width="16" height="16" rx="5" /></svg>
        <span className="relative mb-[3px] ml-[19px] grid size-[34px] place-items-center rounded-full border border-dotted border-[#bfe6f4]"><svg viewBox="0 0 14 9" className="size-[13px]" fill="none" stroke="#fff" strokeWidth="2.800"><path d="M1 1l6 6 6-6" /></svg></span>
        <b className="relative ml-[15px] font-bold tracking-[-0.22px] text-white">Row layouts</b>
        <svg viewBox="0 0 26 26" className="relative mb-[2px] ml-[117px] size-[26px]" fill="none" stroke="#fff"><circle cx="13" cy="13" r="12.500" strokeOpacity=".75" /><path d="M9 10.500Q9 6.800 13 6.800T17 10.200Q17 12.200 15 13.300T13 16.500M13 18.500v1.500" strokeWidth="1.200" /></svg>
        <svg viewBox="0 0 14 14" className="relative mb-px ml-[18px] size-[14px]" stroke="#fff" strokeWidth="1.200"><path d="M.5.5l13 13M13.500.5l-13 13" /></svg>
      </div>
      <div className="flex h-[18px] items-center pl-[22px] mt-[25px]">
        <Check /><span className="ml-2 tracking-[-0.34px]">Double content</span><SlQuestion className="mb-[2px] ml-[3px] size-[13px] text-[#1e8cbe]" />
        <span className="w-[18px]" /><Check /><span className="ml-2 tracking-[-0.31px]">Keep content</span><SlQuestion className="mb-[2px] ml-[3px] size-[13px] text-[#1e8cbe]" />
      </div>
      <div className="mt-[22px] flex pl-[19px]">
        <div className="mt-px h-[34px] w-[91px] rounded-[1px] border border-[#0b8ab5] bg-[#009fd4] pl-[12px] leading-[31px] font-semibold tracking-[-0.55px] text-white">1 Column</div>
        <Btn w="w-[97px]" m="ml-[8px]">2 Columns</Btn><Btn w="w-[97px]" m="ml-[8px]">3 Columns</Btn>
      </div>
      <div className="mt-[7px] flex gap-[8px] pl-[19px]"><Btn w="w-[95px]">4 Columns</Btn><Btn w="w-[95px]">5 Columns</Btn><Btn w="w-[95px]">6 Columns</Btn></div>
      <div className="mx-[15px] mt-[17px] border-t border-[#c3c8cb]" />
      <div className="mt-[15px] flex pl-[20px]">
        <div className="mt-px flex h-[35px] w-[232px] items-center border border-r-0 border-[#b9bdc0] pt-[2px] pl-[10px] tracking-[-0.13px] text-[#b4b4b4]">Example: 15% + 35% + 6/12</div>
        <div className="ml-[11px] grid h-[37px] w-[55px] place-items-center rounded-[2px] border border-[#c6c6c6] bg-[#f4f4f4] pt-px tracking-[-0.18px]">Apply</div>
      </div>
    </div>
  );
}

const Open = ({ children, m = "" }) => <div className={"flex h-5 w-[58px] shrink-0 justify-center overflow-hidden border border-b-0 border-[#a5a5ac] bg-[#8b8b93] " + m}>{children}</div>;

function Taskbar() {
  return (
    <div className="flex h-5 shrink-0 overflow-hidden border-t border-[#5a5a63] bg-gradient-to-r from-[#6b6b74] via-[#74747b] to-[#65656e]">
      <svg viewBox="0 0 27 20" className="ml-[12px] h-5 w-[27px] fill-white"><path d="M0 8.500l12-1.500v13H0zM13.500 6.800L26 5.300V20H13.500z" /></svg>
      <svg viewBox="0 0 30 20" className="ml-[27px] h-5 w-[30px]"><path d="M8 6l22 2v12H5z" fill="#dfe5e6" /><path d="M3 9l5 1v10H1z" fill="#b9c1b5" /><path d="M8 17l4-1 2-6 3 9 3-8 2 6h5" stroke="#3484bf" fill="none" strokeWidth="1.500" /></svg>
      <div className="mt-1 ml-[33px] h-6 w-[28px] shrink-0 border-2 border-[#35b5ea] bg-[#0b1c2e] text-center text-[16px] leading-[21px] font-bold tracking-[-0.5px] text-[#38b8ee]">Ps</div>
      <Open m="ml-[19px]"><div className="mt-[4px] size-[30px] shrink-0 rounded-full bg-[#0badee] text-center text-[22px] leading-[24px] font-bold text-white">S</div></Open>
      <svg viewBox="0 0 30 20" className="ml-[22px] h-5 w-[30px]"><path d="M2 20C3 8 14 2 24 5l2 5-7 3-6 7z" fill="#db4b37" /><path d="M10 20l6-10 1-4 1 5-3 9z" fill="#4a86cc" /></svg>
      <svg viewBox="0 0 30 20" className="ml-[29px] h-5 w-[30px]"><rect y="6" width="29" height="20" rx="4" fill="#f4f4f2" /><path d="M2 20l9-15 5 2-6 13z" fill="#3fa23a" /><path d="M10 6l12 14h-7z" fill="#e04b2d" /></svg>
      <Open m="ml-[17px]"><svg viewBox="0 0 32 20" className="h-5 w-8"><path d="M1 8h12l3 3h15v9H1z" fill="#f3dc83" /><path d="M4 6h7v5H4zM12 8h8v4h-8zM21 10h8v4h-8z" fill="#fbf5df" /><path d="M5 7h2v2H5z" fill="#2c9a44" /><path d="M13 9h2v2h-2z" fill="#c9492b" /><path d="M22 11h2v2h-2z" fill="#3475c4" /></svg></Open>
      <Open m="ml-[4px]"><svg viewBox="0 0 32 20" className="h-5 w-8"><rect y="3" width="32" height="24" rx="4" fill="#ea6d23" /><path d="M6 20V14q0-5 4.500-5T16 14q1-5 5.500-5T26 14v6M10 18q6 2 12 0" fill="none" stroke="#fff" strokeWidth="3.500" /></svg></Open>
      <Open m="ml-[4px]"><svg viewBox="0 0 30 20" className="h-5 w-[30px]"><circle cx="15" cy="19" r="14.500" fill="#e2b92e" /><path d="M1 15A14.500 14.500 0 0 1 29 14H15l-6 6H1z" fill="#db4437" /><path d="M.5 20Q1 14 3 12l6 8z" fill="#2e9e52" /><circle cx="15" cy="19" r="7" fill="#fff" /><circle cx="15" cy="19" r="5.500" fill="#4285f4" /></svg></Open>
      <Open m="ml-[4px]"><svg viewBox="0 0 30 20" className="h-5 w-[30px]"><circle cx="15" cy="18" r="14" fill="#2b7fc4" /><path d="M1 20c0-6 1-9 4-12l2 4 6 2-3 6z" fill="#e77021" /><path d="M20 5c8 3 10 9 9 15h-4c0-6-1-10-5-15z" fill="#f0b52c" /></svg></Open>
      <Open m="ml-[4px]"><div className="mt-[3px] h-6 w-8 bg-black pt-2 text-center font-['Liberation_Serif'] text-[9px] leading-[10px] text-white italic"><span className="text-[#c8323c]">4</span>Gost</div></Open>
      <Open m="ml-[4px]"><svg viewBox="0 0 30 20" className="h-5 w-[30px]"><path d="M1 5h22v15H1z" fill="#f4f6ee" /><path d="M1 5h22" stroke="#777" strokeDasharray="1.500 1" strokeWidth="2" /><path d="M3 9h18M3 12h5" stroke="#b9c8b2" /><path d="M8 11v9M12 13v7M10 16h5M18 13v7M16 16h5" stroke="#222" strokeWidth="1.500" /><path d="M21 20l5-16 3 1-4 15z" fill="#e6b33c" /></svg></Open>
      <span className="grow" />
      <svg viewBox="0 0 110 20" className="mr-[18px] h-5 w-[110px]" fill="none" stroke="#fff"><path d="M0 17l1-2" /><path d="M20 20l10-8-2 6z" fill="#9a63d8" stroke="#b78be8" /><path d="M49.500 20v-5h7v5M51.500 13h3" strokeWidth="1.500" /><path d="M68.500 13.500h4v4h-4zM70 17v3M74 14.500h7V20" strokeWidth="1.300" /><path d="M91 17.500h3l4-3v6M100 15.500q1 2 0 5M102.500 14q2 3 0 7" strokeWidth="1.400" /></svg>
      <span className="mr-[21px] pt-[4px] text-[12px] leading-[16px] tracking-[-0.45px] text-white">3:22 PM</span>
    </div>
  );
}

export default function App() {
  return (
    <div className="relative flex h-[748px] w-[1365px] flex-col overflow-hidden bg-[#f1f1f1] font-['Open_Sans','Noto_Sans',sans-serif]">
      <Chrome />
      <div className="flex h-[638px] shrink-0">
        <div className="flex w-[1349px] flex-col overflow-hidden">
          <AdminBar />
          <div className="flex h-[606px] overflow-hidden bg-[#f1f1f1]"><Sidebar /><Builder /><SideBoxes /></div>
        </div>
        <div className="flex w-4 flex-col items-center bg-[#f1f1f1]">
          <svg viewBox="0 0 7 4" className="mt-[7px] h-1 w-[7px] fill-[#505050]"><path d="M0 4h7L3.500 0z" /></svg>
          <div className="mt-[98px] h-[191px] w-[13px] bg-[#c1c1c1]" />
          <svg viewBox="0 0 7 4" className="mt-auto mb-[7px] h-1 w-[7px] fill-[#505050]"><path d="M0 0h7L3.500 4z" /></svg>
        </div>
      </div>
      <Taskbar />
      <div className="absolute top-[263px] left-[146px] h-[31px] w-[214px] rounded-[2px] bg-[#333] pl-[11px] text-[13px] leading-[32px] tracking-[-0.3px] text-[#ccc]">Set number of columns</div>
      <Popup />
      <svg viewBox="0 0 300 20" className="absolute top-[232px] left-[262px] h-5 w-[300px]"><path d="M14 13.500L293 6.500" stroke="#f00808" strokeWidth="2.600" strokeLinecap="round" /><path d="M4 13l15-4.500-1 9.500z" fill="#f00a0a" /></svg>
      <div className="absolute top-[218px] left-[549px] flex h-[69px] w-[304px] items-center rounded-[3px] border-[3px] border-[#e80c0c] pb-[4px] pl-[21px] text-[25px] tracking-[-0.35px] whitespace-nowrap text-[#d40f0f]">set column from here</div>
    </div>
  );
}
